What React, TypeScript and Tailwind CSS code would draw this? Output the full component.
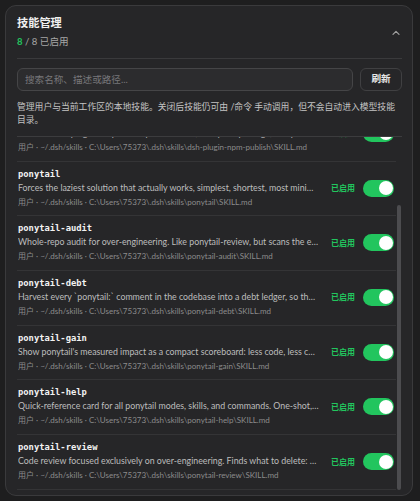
import React from 'react'

type Skill = {
  name: string
  desc: string
  enabled: boolean
}

const SKILLS: Skill[] = [
  {
    name: 'dsh-plugin-dev',
    desc: 'Scaffold, run and debug a dsh plugin locally with hot reload and typed manifests.',
    enabled: true,
  },
  {
    name: 'dsh-plugin-npm-publish',
    desc: 'Publish a dsh plugin to npm: bump the version, verify the package, and push a tagged release.',
    enabled: true,
  },
  {
    name: 'ponytail',
    desc: 'Forces the laziest solution that actually works, simplest, shortest, most minimal code that does the job.',
    enabled: true,
  },
  {
    name: 'ponytail-audit',
    desc: 'Whole-repo audit for over-engineering. Like ponytail-review, but scans the entire codebase at once.',
    enabled: true,
  },
  {
    name: 'ponytail-debt',
    desc: 'Harvest every `ponytail:` comment in the codebase into a debt ledger, so the shortcuts get paid back.',
    enabled: true,
  },
  {
    name: 'ponytail-gain',
    desc: "Show ponytail's measured impact as a compact scoreboard: less code, less complexity, fewer dependencies.",
    enabled: true,
  },
  {
    name: 'ponytail-help',
    desc: 'Quick-reference card for all ponytail modes, skills, and commands. One-shot, no side effects.',
    enabled: true,
  },
  {
    name: 'ponytail-review',
    desc: 'Code review focused exclusively on over-engineering. Finds what to delete: redundant layers, dead options.',
    enabled: true,
  },
]

const SANS = "font-['Lato','Noto_Sans_CJK_SC',sans-serif]"

function skillPath(name: string) {
  return `用户 · ~/.dsh/skills · C:\\Users\\75373\\.dsh\\skills\\${name}\\SKILL.md`
}

function Toggle({ on }: { on: boolean }) {
  return (
    <div
      role="switch"
      aria-checked={on}
      className={`flex h-[17px] w-[31px] shrink-0 items-center rounded-full px-[1.5px] ${
        on ? 'justify-end bg-[#22c55e]' : 'justify-start bg-[#4a4a4c]'
      }`}
    >
      <div className="h-[14px] w-[14px] rounded-full bg-white" />
    </div>
  )
}

function SkillRow({ skill }: { skill: Skill }) {
  return (
    <div className="flex items-center gap-[12px] border-b border-[#343436] pb-[6.7px] pl-px pr-[2px] pt-[6px]">
      <div className="min-w-0 flex-1">
        <div className="font-['DejaVu_Sans_Mono',monospace] text-[8.8px] font-bold leading-[13px] text-[#f2f2f2]">
          {skill.name}
        </div>
        <div className="truncate text-[8.8px] leading-[14px] text-[#bdbdbd]">{skill.desc}</div>
        <div className="truncate text-[8px] leading-[14px] text-[#8c8c8c]">{skillPath(skill.name)}</div>
      </div>
      <div className="flex shrink-0 items-center gap-[8px]">
        <span className="text-[8px] font-bold text-[#22c55e]">{skill.enabled ? '已启用' : '已停用'}</span>
        <Toggle on={skill.enabled} />
      </div>
    </div>
  )
}

export default function App() {
  const enabled = SKILLS.filter((s) => s.enabled).length

  return (
    <div className={`min-h-[501px] bg-[#1e1e1f] pb-[5px] pl-[5px] pr-[7px] pt-[5px] ${SANS}`}>
      <section className="rounded-[11px] border border-[#3a3a3c] bg-[#262628] pb-[3px] pl-[11px] pr-[10px] pt-[9px]">
        {/* header */}
        <div className="flex items-center justify-between border-b border-[#3a3a3c] pb-[9px]">
          <div>
            <h2 className="text-[11.2px] font-bold leading-[16px] text-[#f0f0f0]">技能管理</h2>
            <div className="mt-[4px] text-[9.6px] leading-[14px] text-[#a6a6a6]">
              <span className="font-bold text-[#22c55e]">{enabled}</span> / {SKILLS.length} 已启用
            </div>
          </div>
          <svg width="8" height="5" viewBox="0 0 8 5" className="mr-[2px]" fill="none">
            <polyline points="1,4.3 4,1.3 7,4.3" stroke="#a0a0a0" strokeWidth="1.2" strokeLinecap="round" strokeLinejoin="round" />
          </svg>
        </div>

        {/* search */}
        <div className="mt-[9px] flex h-[23px] gap-[7px]">
          <input
            placeholder="搜索名称、描述或路径..."
            className="h-full min-w-0 flex-1 rounded-[6px] border border-[#454547] bg-[#2c2c2e] px-[7px] text-[9.6px] text-[#e0e0e0] outline-none placeholder:text-[#77777a]"
          />
          <button className="h-full w-[42px] rounded-[6px] border border-[#404042] bg-[#262628] text-[9.6px] font-bold text-[#e6e6e6]">
            刷新
          </button>
        </div>

        <p className="mt-[9px] text-[8.8px] leading-[13.3px] text-[#c4c4c4]">
          管理用户与当前工作区的本地技能。关闭后技能仍可由 /命令 手动调用，但不会自动进入模型技能目录。
        </p>

        {/* list */}
        <div className="mt-[9.3px] flex h-[356px] border-t border-[#3c3c3e]">
          <div className="min-w-0 flex-1 overflow-hidden">
            <div className="-mt-[84.7px]">
              {SKILLS.map((s) => (
                <SkillRow key={s.name} skill={s} />
              ))}
            </div>
          </div>
          <div className="w-[6px] shrink-0 pl-px pt-[68px]">
            <div className="h-[285px] w-[4px] rounded-full bg-[#4c4c4f]" />
          </div>
        </div>
      </section>
    </div>
  )
}
